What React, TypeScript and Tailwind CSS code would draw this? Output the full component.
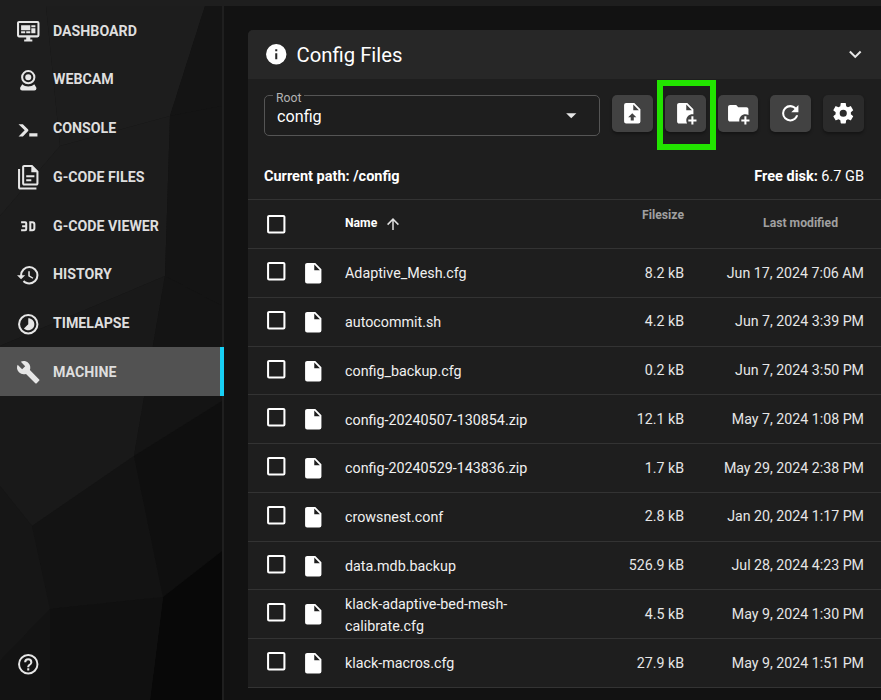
const P = {
  dash: "M21,16V4H3V16H21M21,2A2,2 0 0,1 23,4V16A2,2 0 0,1 21,18H14V20H16V22H8V20H10V18H3C1.89,18 1,17.1 1,16V4C1,2.89 1.89,2 3,2H21M5,6H14V11H5V6M15,6H19V8H15V6M19,9V14H15V9H19M5,12H9V14H5V12M10,12H14V14H10V12Z",
  webcam: "M12,2A7,7 0 0,1 19,9A7,7 0 0,1 12,16A7,7 0 0,1 5,9A7,7 0 0,1 12,2M12,4A5,5 0 0,0 7,9A5,5 0 0,0 12,14A5,5 0 0,0 17,9A5,5 0 0,0 12,4M12,6A3,3 0 0,1 15,9A3,3 0 0,1 12,12A3,3 0 0,1 9,9A3,3 0 0,1 12,6M6,22A2,2 0 0,1 4,20C4,19.62 4.1,19.27 4.29,18.97L6.11,15.81C7.69,17.17 9.75,18 12,18C14.25,18 16.31,17.17 17.89,15.81L19.71,18.97C19.9,19.27 20,19.62 20,20A2,2 0 0,1 18,22H6Z",
  console: "M13,19V16H21V19H13M8.5,13L2.47,7H6.71L11.67,11.95C12.25,12.54 12.25,13.5 11.67,14.07L6.74,19H2.5L8.5,13Z",
  files: "M16 0H8C6.9 0 6 .9 6 2V18C6 19.1 6.9 20 8 20H20C21.1 20 22 19.1 22 18V6L16 0M20 18H8V2H15V7H20V18M4 4V22H20V24H4C2.9 24 2 23.1 2 22V4H4M10 10V12H18V10H10M10 14V16H15V14H10Z",
  v3d: "M5,7H9A2,2 0 0,1 11,9V15A2,2 0 0,1 9,17H5V15H9V13H6V11H9V9H5V7M13,7H16A3,3 0 0,1 19,10V14A3,3 0 0,1 16,17H13V7M16,15A1,1 0 0,0 17,14V10A1,1 0 0,0 16,9H15V15H16Z",
  history: "M13.5,8H12V13L16.28,15.54L17,14.33L13.5,12.25V8M13,3A9,9 0 0,0 4,12H1L4.96,16.03L9,12H6A7,7 0 0,1 13,5A7,7 0 0,1 20,12A7,7 0 0,1 13,19C11.07,19 9.32,18.21 8.06,16.94L6.64,18.36C8.27,20 10.5,21 13,21A9,9 0 0,0 22,12A9,9 0 0,0 13,3",
  timelapse: "M16.24,7.76C15.07,6.58 13.53,6 12,6V12L7.76,16.24C10.1,18.58 13.9,18.58 16.25,16.24C18.59,13.9 18.59,10.1 16.24,7.76M12,2A10,10 0 0,0 2,12A10,10 0 0,0 12,22A10,10 0 0,0 22,12A10,10 0 0,0 12,2M12,20A8,8 0 0,1 4,12A8,8 0 0,1 12,4A8,8 0 0,1 20,12A8,8 0 0,1 12,20Z",
  wrench: "M22.7,19L13.6,9.9C14.5,7.6 14,4.9 12.1,3C10.1,1 7.1,0.6 4.7,1.7L9,6L6,9L1.6,4.7C0.4,7.1 0.9,10.1 2.9,12.1C4.8,14 7.5,14.5 9.8,13.6L18.9,22.7C19.3,23.1 19.9,23.1 20.3,22.7L22.6,20.4C23.1,20 23.1,19.3 22.7,19Z",
  help: "M11,18H13V16H11V18M12,2A10,10 0 0,0 2,12A10,10 0 0,0 12,22A10,10 0 0,0 22,12A10,10 0 0,0 12,2M12,20C7.59,20 4,16.41 4,12C4,7.59 7.59,4 12,4C16.41,4 20,7.59 20,12C20,16.41 16.41,20 12,20M12,6A4,4 0 0,0 8,10H10A2,2 0 0,1 12,8A2,2 0 0,1 14,10C14,12 11,11.75 11,15H13C13,12.75 16,12.5 16,10A4,4 0 0,0 12,6Z",
  info: "M13,9H11V7H13M13,17H11V11H13M12,2A10,10 0 0,0 2,12A10,10 0 0,0 12,22A10,10 0 0,0 22,12A10,10 0 0,0 12,2Z",
  chevron: "M7.41,8.58L12,13.17L16.59,8.58L18,10L12,16L6,10L7.41,8.58Z",
  menuDown: "M7,10L12,15L17,10H7Z",
  fileUpload: "M14,2H6A2,2 0 0,0 4,4V20A2,2 0 0,0 6,22H18A2,2 0 0,0 20,20V8L14,2M13.5,16V19H10.5V16H8L12,12L16,16H13.5M13,9V3.5L18.5,9H13Z",
  filePlus: "M14 2H6C4.89 2 4 2.89 4 4V20C4 21.11 4.89 22 6 22H13.81C13.28 21.09 13 20.05 13 19C13 15.69 15.69 13 19 13C19.34 13 19.67 13.03 20 13.08V8L14 2M13 9V3.5L18.5 9H13M23 20H20V23H18V20H15V18H18V15H20V18H23V20Z",
  folderPlus: "M13 19C13 19.34 13.04 19.67 13.09 20H4C2.9 20 2 19.11 2 18V6C2 4.89 2.89 4 4 4H10L12 6H20C21.1 6 22 6.89 22 8V13.81C21.12 13.3 20.1 13 19 13C15.69 13 13 15.69 13 19M20 18V15H18V18H15V20H18V23H20V20H23V18H20Z",
  refresh: "M17.65,6.35C16.2,4.9 14.21,4 12,4A8,8 0 0,0 4,12A8,8 0 0,0 12,20C15.73,20 18.84,17.45 19.73,14H17.65C16.83,16.33 14.61,18 12,18A6,6 0 0,1 6,12A6,6 0 0,1 12,6C13.66,6 15.14,6.69 16.22,7.78L13,11H20V4L17.65,6.35Z",
  cog: "M12,15.5A3.5,3.5 0 0,1 8.5,12A3.5,3.5 0 0,1 12,8.5A3.5,3.5 0 0,1 15.5,12A3.5,3.5 0 0,1 12,15.5M19.43,12.97C19.47,12.65 19.5,12.33 19.5,12C19.5,11.67 19.47,11.34 19.43,11L21.54,9.37C21.73,9.22 21.78,8.95 21.66,8.73L19.66,5.27C19.54,5.05 19.27,4.96 19.05,5.05L16.56,6.05C16.04,5.66 15.5,5.32 14.87,5.07L14.5,2.42C14.46,2.18 14.25,2 14,2H10C9.75,2 9.54,2.18 9.5,2.42L9.13,5.07C8.5,5.32 7.96,5.66 7.44,6.05L4.95,5.05C4.73,4.96 4.46,5.05 4.34,5.27L2.34,8.73C2.21,8.95 2.27,9.22 2.46,9.37L4.57,11C4.53,11.34 4.5,11.67 4.5,12C4.5,12.33 4.53,12.65 4.57,12.97L2.46,14.63C2.27,14.78 2.21,15.05 2.34,15.27L4.34,18.73C4.46,18.95 4.73,19.03 4.95,18.95L7.44,17.94C7.96,18.34 8.5,18.68 9.13,18.93L9.5,21.58C9.54,21.82 9.75,22 10,22H14C14.25,22 14.46,21.82 14.5,21.58L14.87,18.93C15.5,18.67 16.04,18.34 16.56,17.94L19.05,18.95C19.27,19.03 19.54,18.95 19.66,18.73L21.66,15.27C21.78,15.05 21.73,14.78 21.54,14.63L19.43,12.97Z",
  file: "M13,9V3.5L18.5,9M6,2C4.89,2 4,2.89 4,4V20A2,2 0 0,0 6,22H18A2,2 0 0,0 20,20V8L14,2H6Z",
  arrowUp: "M13,20H11V8L5.5,13.5L4.08,12.08L12,4.16L19.92,12.08L18.5,13.5L13,8V20Z",
  box: "M19,3H5C3.89,3 3,3.89 3,5V19A2,2 0 0,0 5,21H19A2,2 0 0,0 21,19V5C21,3.89 20.1,3 19,3M19,5V19H5V5H19Z",
};

function Icon({ d, className = "" }: { d: string; className?: string }) {
  return (
    <svg viewBox="0 0 24 24" className={`block shrink-0 fill-current ${className}`}>
      <path d={d} />
    </svg>
  );
}

const nav = [
  { label: "Dashboard", d: P.dash },
  { label: "Webcam", d: P.webcam },
  { label: "Console", d: P.console },
  { label: "G-Code Files", d: P.files },
  { label: "G-Code Viewer", d: P.v3d },
  { label: "History", d: P.history },
  { label: "Timelapse", d: P.timelapse },
  { label: "Machine", d: P.wrench, active: true },
];

const files = [
  ["Adaptive_Mesh.cfg", "8.2 kB", "Jun 17, 2024 7:06 AM"],
  ["autocommit.sh", "4.2 kB", "Jun 7, 2024 3:39 PM"],
  ["config_backup.cfg", "0.2 kB", "Jun 7, 2024 3:50 PM"],
  ["config-20240507-130854.zip", "12.1 kB", "May 7, 2024 1:08 PM"],
  ["config-20240529-143836.zip", "1.7 kB", "May 29, 2024 2:38 PM"],
  ["crowsnest.conf", "2.8 kB", "Jan 20, 2024 1:17 PM"],
  ["data.mdb.backup", "526.9 kB", "Jul 28, 2024 4:23 PM"],
  ["klack-adaptive-bed-mesh-calibrate.cfg", "4.5 kB", "May 9, 2024 1:30 PM"],
  ["klack-macros.cfg", "27.9 kB", "May 9, 2024 1:51 PM"],
];

function ToolButton({ d, dark }: { d: string; dark?: boolean }) {
  return (
    <button
      className={`flex h-[37px] w-[40.75px] items-center justify-center rounded-[5px] text-white shadow-[0_2px_3px_rgba(0,0,0,0.35)] ${dark ? "bg-[#2b2b2b]" : "bg-[#424242]"}`}
    >
      <Icon d={d} className="h-[24.5px] w-[24.5px]" />
    </button>
  );
}

export default function App() {
  return (
    <div className="relative flex h-[700px] w-[881px] flex-col overflow-hidden bg-[#121212] font-['Roboto',sans-serif] text-white">
      <div className="h-[6px] shrink-0 bg-[#1e1e1e]" />
      <div className="flex min-h-0 flex-1">
        <aside className="relative flex w-[224px] shrink-0 flex-col justify-between overflow-hidden bg-[#141414] pb-[24px]">
          <svg viewBox="0 0 222 694" preserveAspectRatio="none" className="absolute inset-y-0 left-0 h-full w-[222px]" aria-hidden="true">
            <polygon points="0,0 46,0 60,140 0,210" fill="#1e1e1e" />
            <polygon points="46,0 205,0 170,110 60,140" fill="#1d1d1d" />
            <polygon points="205,0 222,0 222,100 170,110" fill="#141414" />
            <polygon points="0,210 60,140 170,110 165,270 0,340" fill="#1c1c1c" />
            <polygon points="170,110 222,100 222,300 165,270" fill="#141414" />
            <polygon points="0,340 165,270 134,450 32,520 0,480" fill="#191919" />
            <polygon points="165,270 222,300 222,395 134,450" fill="#141414" />
            <polygon points="32,520 134,450 163,591 50,603" fill="#131313" />
            <polygon points="134,450 222,395 222,545 163,591" fill="#0f0f0f" />
            <polygon points="163,591 222,545 222,694 150,694" fill="#080808" />
            <polygon points="50,603 163,591 150,694 50,694" fill="#101010" />
            <polygon points="0,480 32,520 50,603 0,655" fill="#161616" />
            <polygon points="0,655 50,603 50,694 0,694" fill="#131313" />
          </svg>
          <div className="absolute inset-y-0 right-0 w-[2px] bg-[#1f1f1f]" />
          <nav className="relative">
            {nav.map((n) => (
              <div
                key={n.label}
                className={`relative flex h-[48.75px] items-center pl-[16px] pt-[2px] ${n.active ? "bg-[#525252]" : ""}`}
              >
                <Icon d={n.d} className="h-[24.5px] w-[24.5px] text-[#e6e6e6]" />
                <span className="ml-[12.5px] text-[14.2px] font-bold uppercase text-[#dedede]">{n.label}</span>
                {n.active && <span className="absolute inset-y-0 right-0 w-[4px] bg-[#18d0f5]" />}
              </div>
            ))}
          </nav>
          <div className="relative pl-[16px]">
            <Icon d={P.help} className="h-[24.5px] w-[24.5px] text-[#e6e6e6]" />
          </div>
        </aside>

        <main className="min-w-0 flex-1 pl-[24px] pt-[24px]">
          <section className="w-[633px] overflow-hidden rounded-tl-[5px] bg-[#1e1e1e]">
            <header className="flex h-[49px] items-center bg-[#272727] pl-[16px] pr-[14px]">
              <Icon d={P.info} className="h-[24.5px] w-[24.5px] text-white" />
              <h2 className="ml-[8px] flex-1 pt-[2px] text-[20.3px] font-normal leading-none">Config Files</h2>
              <Icon d={P.chevron} className="h-[24.5px] w-[24.5px] text-[#e6e6e6]" />
            </header>

            <div className="flex items-start pl-[16px] pr-[17px] pt-[16px]">
              <div className="relative flex h-[41px] w-[336px] items-center justify-between rounded-[5px] border border-[#555555] pl-[12px] pr-[16px]">
                <span className="absolute left-[8px] top-[-5px] bg-[#1e1e1e] px-[3px] text-[12.2px] leading-[14px] text-[#b3b3b3]">Root</span>
                <span className="pt-[3px] text-[16.2px]">config</span>
                <Icon d={P.menuDown} className="h-[24.5px] w-[24.5px] text-[#e6e6e6]" />
              </div>
              <div className="ml-[12px] flex gap-[12px]">
                <ToolButton d={P.fileUpload} />
                <ToolButton d={P.filePlus} />
                <ToolButton d={P.folderPlus} />
                <ToolButton d={P.refresh} />
                <ToolButton d={P.cog} dark />
              </div>
            </div>

            <div className="mb-[4px] mt-[23px] flex h-[36px] items-center justify-between pl-[16px] pr-[17px] text-[14.5px]">
              <span className="font-bold">Current path: /config</span>
              <span>
                <b className="font-bold">Free disk:</b> 6.7 GB
              </span>
            </div>

            <div className="flex h-[50px] items-center border-y border-[#333333] pl-[17px] pr-[17px]">
              <Icon d={P.box} className="ml-[-1px] h-[24.5px] w-[24.5px] text-white" />
              <span className="mb-[1px] ml-[56.5px] text-[12.2px] font-bold text-white">Name</span>
              <Icon d={P.arrowUp} className="ml-[7px] h-[18px] w-[18px] text-[#e0e0e0]" />
              <span className="mb-[18px] ml-auto text-[12.2px] font-bold text-[#a0a0a0]">Filesize</span>
              <span className="mb-[1px] w-[180px] pr-[26px] text-right text-[12.2px] font-bold text-[#a0a0a0]">Last modified</span>
            </div>

            {files.map(([name, size, date]) => (
              <div key={name} className="flex h-[48.75px] items-center border-b border-[#333333] pl-[17px] pr-[17px] pt-[1px] text-[14.2px]">
                <Icon d={P.box} className="mb-[4px] ml-[-1px] h-[24.5px] w-[24.5px] text-white" />
                <Icon d={P.file} className="ml-[12.5px] h-[24.5px] w-[24.5px] text-white" />
                <span className="ml-[19.5px] w-[190px] text-[14.3px] leading-[22px] text-[#f0f0f0]">{name}</span>
                <span className="ml-auto text-[#e6e6e6]">{size}</span>
                <span className="w-[180px] text-right text-[#e6e6e6]">{date}</span>
              </div>
            ))}
          </section>
        </main>
      </div>

      <div className="absolute left-[657px] top-[80px] h-[70px] w-[59px] border-[6px] border-[#22e400]" />
    </div>
  );
}
